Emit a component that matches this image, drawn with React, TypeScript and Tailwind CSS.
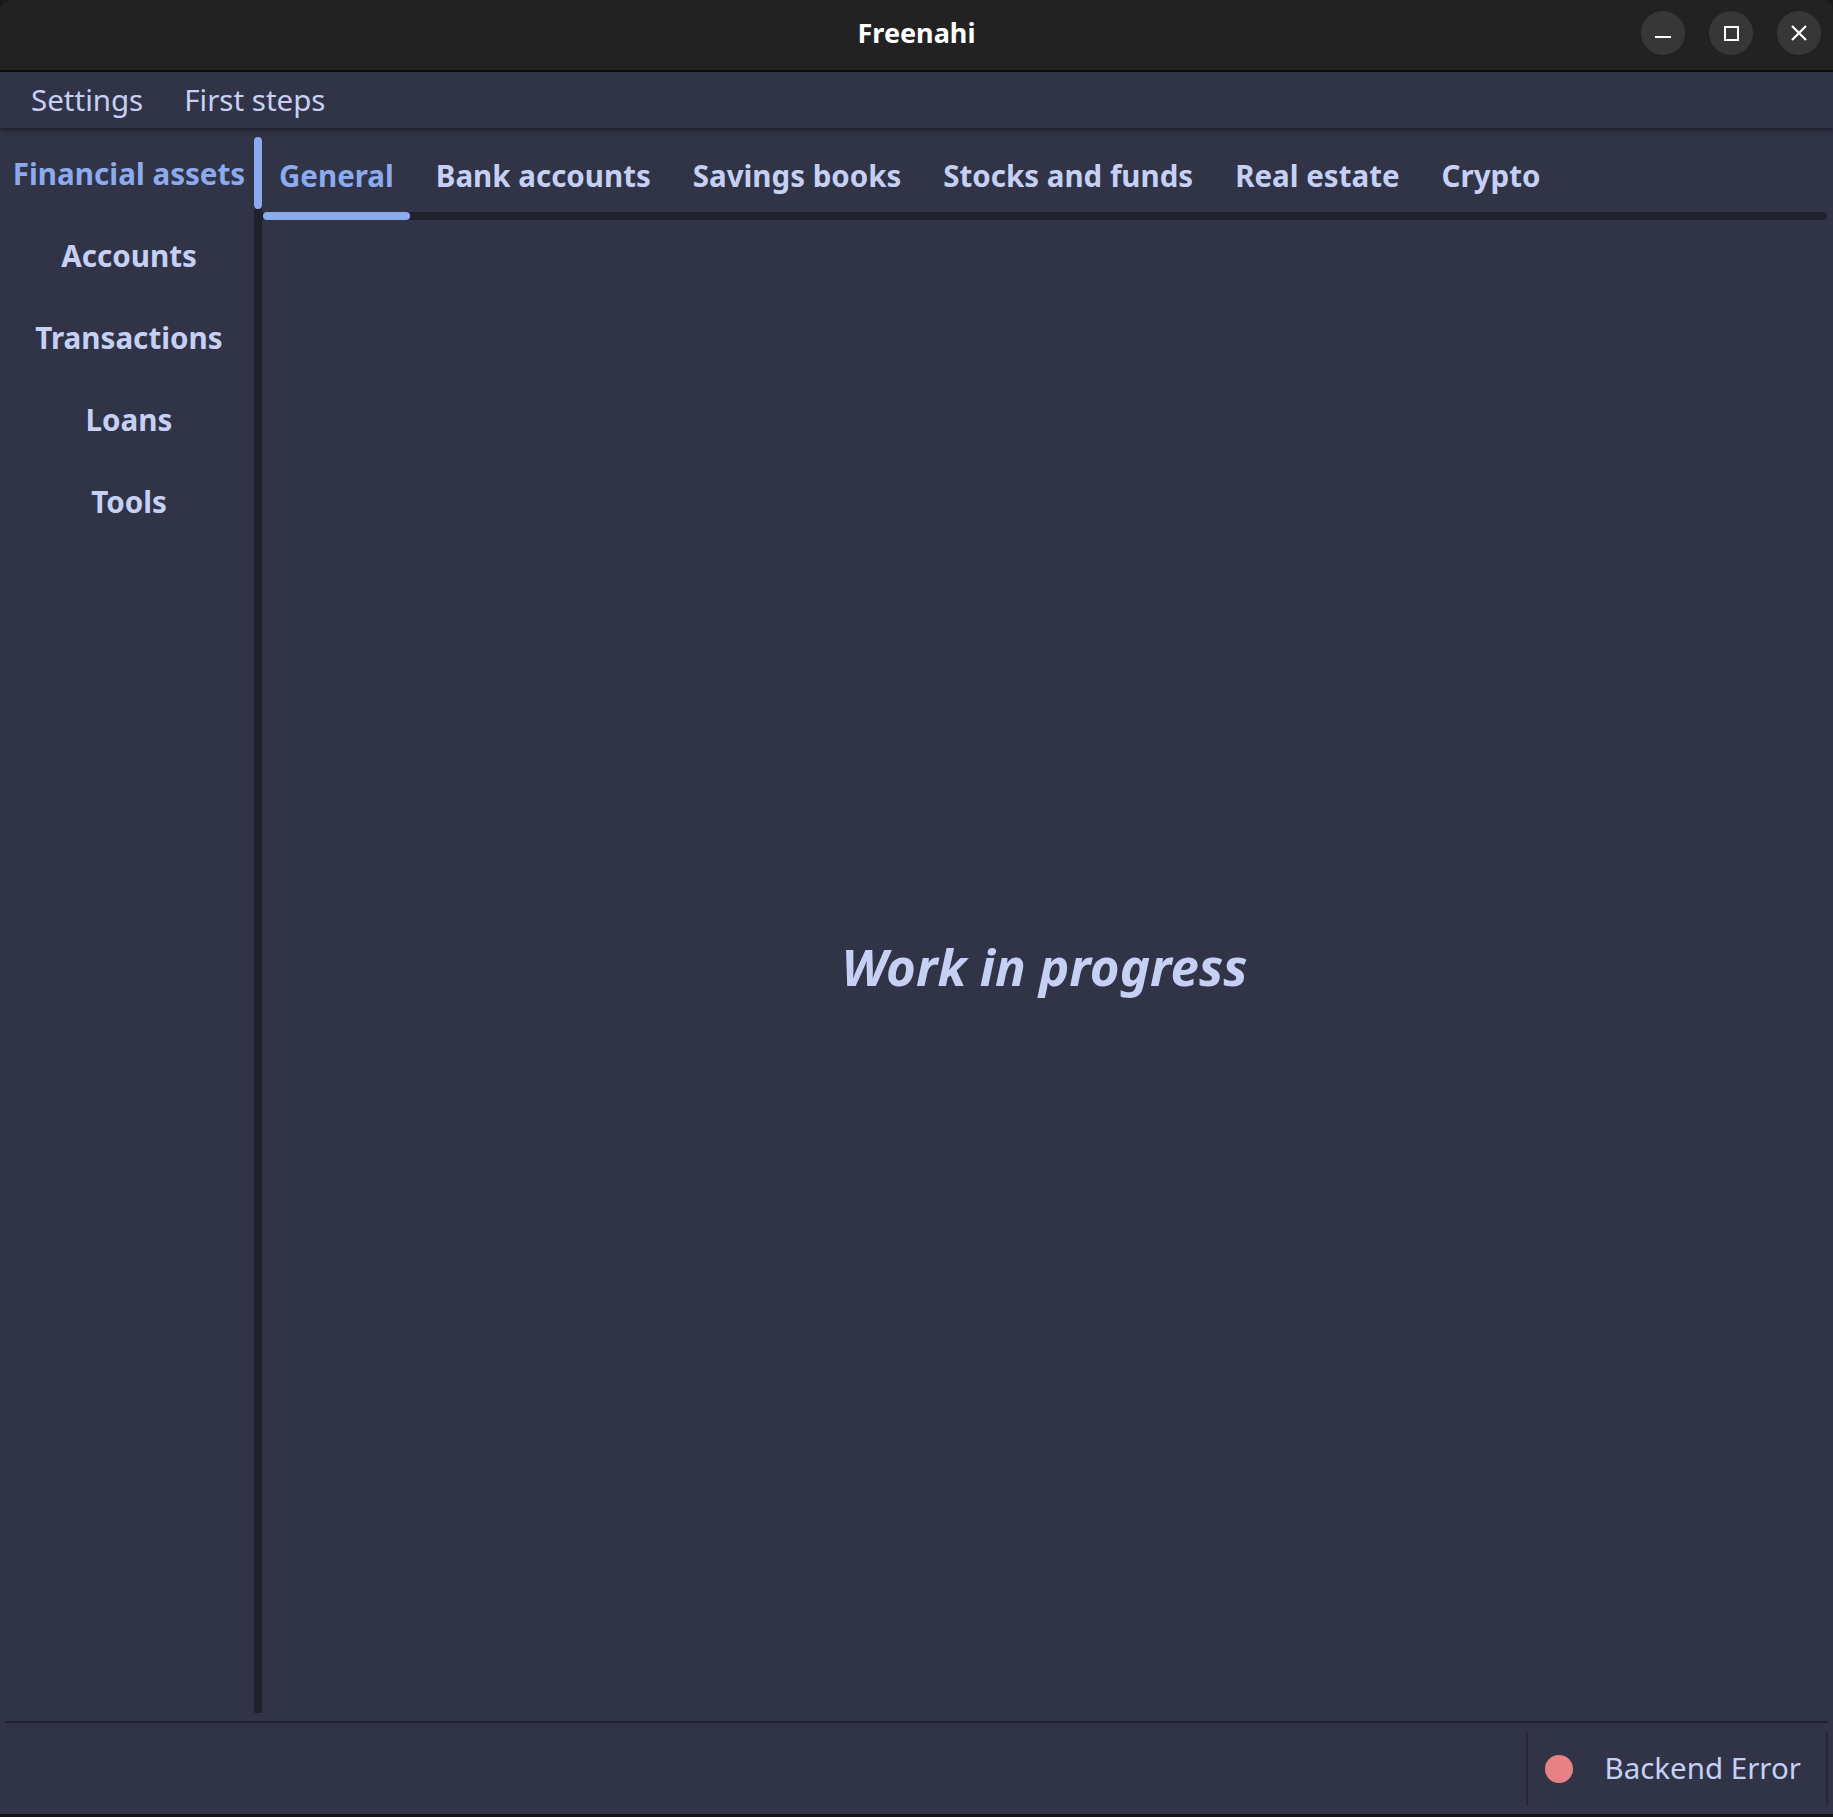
import React from 'react';

const sideItems = ['Financial assets', 'Accounts', 'Transactions', 'Loans', 'Tools'];
const tabs = ['General', 'Bank accounts', 'Savings books', 'Stocks and funds', 'Real estate', 'Crypto'];

function WindowButton({ children }: { children: React.ReactNode }) {
  return (
    <div className="flex h-[44px] w-[44px] items-center justify-center rounded-full bg-[#373737]">
      {children}
    </div>
  );
}

export default function App() {
  return (
    <div
      className="flex h-[1817px] w-[1833px] flex-col overflow-hidden bg-[#1a1a1a] text-[#c6d0f5]"
      style={{ fontFamily: '"Noto Sans", "Open Sans", sans-serif' }}
    >
      {/* Title bar */}
      <div className="relative flex h-[70px] shrink-0 items-center justify-center rounded-t-[10px] bg-[#222222] pb-[4px]">
        <span className="text-[27px] font-bold text-white">Freenahi</span>
        <div className="absolute right-[12px] top-[11px] flex gap-[24px]">
          <WindowButton>
            <div className="mt-[8px] h-[2px] w-[16px] bg-white" />
          </WindowButton>
          <WindowButton>
            <div className="h-[15px] w-[15px] border-2 border-white" />
          </WindowButton>
          <WindowButton>
            <svg width="18" height="18" viewBox="0 0 18 18">
              <path d="M2 2L16 16M16 2L2 16" stroke="white" strokeWidth="2.2" />
            </svg>
          </WindowButton>
        </div>
      </div>
      <div className="h-[2px] shrink-0 bg-[#0c0c0c]" />

      {/* Menu bar */}
      <div className="relative z-10 flex h-[56px] shrink-0 items-center gap-[41px] bg-[#303446] pl-[31px] text-[29.5px] shadow-[0_3px_4px_rgba(0,0,0,0.35)]">
        <span>Settings</span>
        <span>First steps</span>
      </div>

      {/* Body */}
      <div className="flex min-h-0 flex-1 flex-col bg-[#303446]">
        <div className="flex min-h-0 flex-1 pt-[9px]">
          {/* Sidebar */}
          <div className="flex w-[254px] shrink-0 flex-col items-center pl-[4px]">
            {sideItems.map((item, i) => (
              <div
                key={item}
                className={`flex h-[82px] w-full items-center justify-center text-[29.6px] font-bold leading-none ${
                  i === 0 ? 'text-[#8caaee]' : 'text-[#c6d0f5]'
                }`}
              >
                <span className="mt-[-8px]">{item}</span>
              </div>
            ))}
          </div>

          {/* Separator with active indicator */}
          <div className="relative w-[8px] shrink-0 rounded-t-full bg-[#1f212d]">
            <div className="absolute left-0 top-0 h-[72px] w-[8px] rounded-full bg-[#8caaee]" />
          </div>

          {/* Content */}
          <div className="flex min-w-0 flex-1 flex-col pr-[6px]">
            <div className="flex h-[75px] items-center pl-[17px] pt-[3px] text-[29.5px] font-bold">
              {tabs.map((tab, i) => (
                <span
                  key={tab}
                  className={`mr-[42px] ${i === 0 ? 'text-[#8caaee]' : 'text-[#c6d0f5]'}`}
                >
                  {tab}
                </span>
              ))}
            </div>
            <div className="flex h-[8px] rounded-r-full bg-[#1f212d]">
              <div className="ml-[1px] h-[8px] w-[147px] rounded-full bg-[#8caaee]" />
            </div>
            <div className="flex flex-1 items-center justify-center pb-[1px]">
              <span className="text-[51px] font-bold italic text-[#c6d0f5]">Work in progress</span>
            </div>
          </div>
        </div>

        {/* Status bar */}
        <div className="mx-[5px] mt-[8px] h-[2px] shrink-0 bg-[#1f212d]" />
        <div className="flex h-[91px] shrink-0 items-center justify-end pr-[5px]">
          <div className="flex h-[74px] items-center border-x-2 border-[#262836] pl-[17px] pr-[25px]">
            <div className="h-[28px] w-[28px] rounded-full bg-[#e78284]" />
            <span className="ml-[31px] text-[29.5px]">Backend Error</span>
          </div>
        </div>
      </div>
      <div className="h-[3px] shrink-0 bg-[#141414]" />
    </div>
  );
}
